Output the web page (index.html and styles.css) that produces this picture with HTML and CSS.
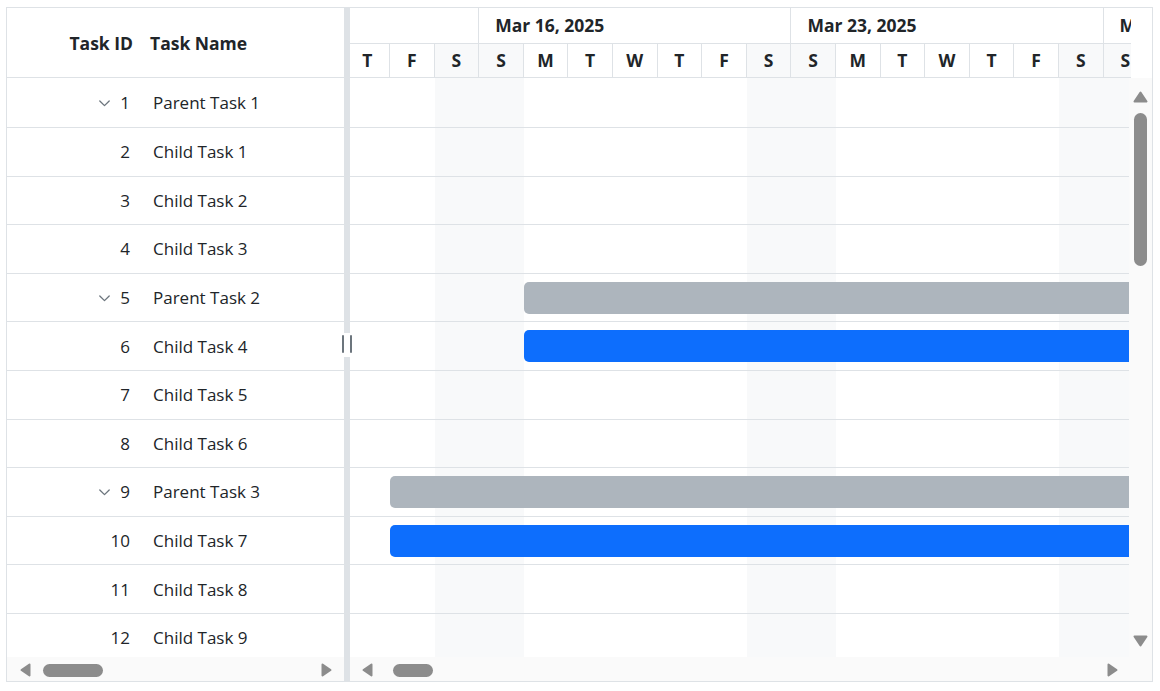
FILE: index.html
```html
<!DOCTYPE html>
<html lang="en">
<head>
<meta charset="utf-8">
<title>Gantt</title>
<link rel="stylesheet" href="styles.css">
</head>
<body>
<div class="gantt">
  <div class="grid-pane">
    <div class="grid-header">
      <div class="hc hc-id">Task ID</div>
      <div class="hc hc-name">Task Name</div>
    </div>
    <div class="grid-body">
      <div class="row"><div class="c-id"><svg class="chev" width="11" height="7" viewBox="0 0 11 7"><polyline points="0.8,1 5.5,5.6 10.2,1"/></svg>1</div><div class="c-name">Parent Task 1</div></div>
      <div class="row"><div class="c-id">2</div><div class="c-name">Child Task 1</div></div>
      <div class="row"><div class="c-id">3</div><div class="c-name">Child Task 2</div></div>
      <div class="row"><div class="c-id">4</div><div class="c-name">Child Task 3</div></div>
      <div class="row"><div class="c-id"><svg class="chev" width="11" height="7" viewBox="0 0 11 7"><polyline points="0.8,1 5.5,5.6 10.2,1"/></svg>5</div><div class="c-name">Parent Task 2</div></div>
      <div class="row"><div class="c-id">6</div><div class="c-name">Child Task 4</div></div>
      <div class="row"><div class="c-id">7</div><div class="c-name">Child Task 5</div></div>
      <div class="row"><div class="c-id">8</div><div class="c-name">Child Task 6</div></div>
      <div class="row"><div class="c-id"><svg class="chev" width="11" height="7" viewBox="0 0 11 7"><polyline points="0.8,1 5.5,5.6 10.2,1"/></svg>9</div><div class="c-name">Parent Task 3</div></div>
      <div class="row"><div class="c-id">10</div><div class="c-name">Child Task 7</div></div>
      <div class="row"><div class="c-id">11</div><div class="c-name">Child Task 8</div></div>
      <div class="row"><div class="c-id">12</div><div class="c-name">Child Task 9</div></div>
    </div>
    <div class="hscroll hscroll-left">
      <svg class="arr" width="11" height="14" viewBox="0 0 11 14"><path d="M9.5 1.5 L1.5 7 L9.5 12.5 Z"/></svg>
      <div class="thumb-h thumb-left"></div>
      <svg class="arr arr-end" width="11" height="14" viewBox="0 0 11 14"><path d="M1.5 1.5 L9.5 7 L1.5 12.5 Z"/></svg>
    </div>
  </div>

  <div class="splitter">
    <div class="handle"><span></span><span></span></div>
  </div>

  <div class="chart-pane">
    <div class="chart-header">
      <div class="th-clip">
        <div class="timeline-head">
          <div class="tier1">
            <div class="wk wk3"></div>
            <div class="wk wk7">Mar 16, 2025</div>
            <div class="wk wk8">Mar 23, 2025</div>
            <div class="wk wk8">Mar 30, 2025</div>
          </div>
          <div class="tier2">
            <div class="day">T</div><div class="day">F</div><div class="day we">S</div>
            <div class="day we">S</div><div class="day">M</div><div class="day">T</div><div class="day">W</div><div class="day">T</div><div class="day">F</div><div class="day we">S</div>
            <div class="day we">S</div><div class="day">M</div><div class="day">T</div><div class="day">W</div><div class="day">T</div><div class="day">F</div><div class="day we">S</div>
            <div class="day we">S</div>
          </div>
        </div>
      </div>
      <div class="th-spacer"></div>
    </div>

    <div class="chart-mid">
      <div class="chart-body">
        <div class="timeline-body">
          <div class="shade">
            <div class="sd"></div><div class="sd"></div><div class="sd we"></div>
            <div class="sd we"></div><div class="sd"></div><div class="sd"></div><div class="sd"></div><div class="sd"></div><div class="sd"></div><div class="sd we"></div>
            <div class="sd we"></div><div class="sd"></div><div class="sd"></div><div class="sd"></div><div class="sd"></div><div class="sd"></div><div class="sd we"></div>
            <div class="sd we"></div>
          </div>
          <div class="crow"></div>
          <div class="crow"></div>
          <div class="crow"></div>
          <div class="crow"></div>
          <div class="crow"><div class="bar bar-parent" style="margin-left:178.4px;width:640px"></div></div>
          <div class="crow"><div class="bar bar-child" style="margin-left:178.4px;width:640px"></div></div>
          <div class="crow"></div>
          <div class="crow"></div>
          <div class="crow"><div class="bar bar-parent" style="margin-left:44.6px;width:780px"></div></div>
          <div class="crow"><div class="bar bar-child" style="margin-left:44.6px;width:780px"></div></div>
          <div class="crow"></div>
          <div class="crow"></div>
        </div>
      </div>
      <div class="vscroll">
        <svg class="arr" width="15" height="12" viewBox="0 0 15 12"><path d="M1.5 10.5 L7.5 1.5 L13.5 10.5 Z"/></svg>
        <div class="thumb-v"></div>
        <svg class="arr arr-down" width="15" height="12" viewBox="0 0 15 12"><path d="M1.5 1.5 L7.5 10.5 L13.5 1.5 Z"/></svg>
      </div>
    </div>

    <div class="hscroll-row">
      <div class="hscroll hscroll-right">
        <svg class="arr" width="11" height="14" viewBox="0 0 11 14"><path d="M9.5 1.5 L1.5 7 L9.5 12.5 Z"/></svg>
        <div class="thumb-h thumb-right"></div>
        <svg class="arr arr-end" width="11" height="14" viewBox="0 0 11 14"><path d="M1.5 1.5 L9.5 7 L1.5 12.5 Z"/></svg>
      </div>
      <div class="corner"></div>
    </div>
  </div>
</div>
</body>
</html>
```

FILE: styles.css
```css
* { box-sizing: border-box; }

body {
  margin: 0;
  background: #ffffff;
  color: #212529;
  font-family: "Open Sans", "Noto Sans", "Liberation Sans", sans-serif;
  font-size: 17px;
}

.gantt {
  display: flex;
  width: 1147px;
  height: 675px;
  margin: 7px 0 0 6px;
  border: 1px solid #dee2e6;
  overflow: hidden;
}

/* ---------- left grid ---------- */
.grid-pane {
  width: 337px;
  flex: none;
  display: flex;
  flex-direction: column;
}

.grid-header {
  height: 70px;
  flex: none;
  display: flex;
  align-items: center;
  border-bottom: 1px solid #dee2e6;
  font-weight: 700;
  font-size: 17.5px;
}

.hc-id {
  width: 134px;
  text-align: right;
  padding-right: 8px;
}

.hc-name {
  padding-left: 9px;
}

.grid-body {
  flex: 1;
  min-height: 0;
  overflow: hidden;
}

.row,
.crow {
  height: 48.6px;
  border-bottom: 1px solid #dee2e6;
}

.row:first-child,
.crow:nth-child(2) {
  height: 50px;
}

.row {
  display: flex;
  align-items: center;
}

.c-id {
  width: 134px;
  flex: none;
  display: flex;
  align-items: center;
  justify-content: flex-end;
  padding-right: 11px;
}

.c-name {
  padding-left: 12px;
  white-space: nowrap;
}

.chev {
  margin-right: 10px;
  margin-top: 1px;
  fill: none;
  stroke: #6c757d;
  stroke-width: 1.3;
  stroke-linecap: round;
  stroke-linejoin: round;
}

/* ---------- scrollbars ---------- */
.hscroll {
  height: 24px;
  flex: none;
  display: flex;
  align-items: center;
  background: #fafafa;
  padding-top: 2px;
}

.hscroll-left {
  padding-left: 13px;
  padding-right: 12px;
}

.hscroll-right {
  flex: 1;
  padding-left: 12px;
  padding-right: 11px;
}

.arr path {
  fill: #8c8c8c;
  stroke: #8c8c8c;
  stroke-width: 2;
  stroke-linejoin: round;
}

.arr-end {
  margin-left: auto;
}

.thumb-h {
  height: 13px;
  border-radius: 7px;
  background: #8c8c8c;
}

.thumb-left {
  width: 60px;
  margin-left: 12px;
}

.thumb-right {
  width: 40px;
  margin-left: 20px;
}

.hscroll-row {
  height: 24px;
  flex: none;
  display: flex;
}

.corner {
  width: 23px;
  background: #fafafa;
}

.vscroll {
  width: 23px;
  flex: none;
  background: #fafafa;
  display: flex;
  flex-direction: column;
  align-items: center;
  padding-top: 13px;
  padding-bottom: 10px;
}

.thumb-v {
  width: 13px;
  height: 153px;
  margin-top: 10px;
  border-radius: 7px;
  background: #8c8c8c;
}

.arr-down {
  margin-top: auto;
}

/* ---------- splitter ---------- */
.splitter {
  width: 6px;
  flex: none;
  background: #dee2e6;
  position: relative;
}

.handle {
  position: absolute;
  left: -3px;
  top: 325px;
  width: 12px;
  height: 24px;
  background: #ffffff;
  display: flex;
  justify-content: space-between;
  padding: 2px 1px;
}

.handle span {
  width: 2px;
  height: 18px;
  border-radius: 1px;
  background: #6c757d;
}

/* ---------- chart ---------- */
.chart-pane {
  flex: 1;
  min-width: 0;
  display: flex;
  flex-direction: column;
}

.chart-header {
  height: 70px;
  flex: none;
  display: flex;
}

.th-clip {
  flex: 1;
  min-width: 0;
  overflow: hidden;
  border-bottom: 1px solid #dee2e6;
}

.th-spacer {
  width: 21px;
  flex: none;
}

.timeline-head {
  width: 802.8px;
  margin-left: -4.6px;
  font-weight: 700;
  font-size: 17.5px;
}

.tier1 {
  height: 36px;
  display: flex;
  border-bottom: 1px solid #dee2e6;
}

.wk {
  flex: none;
  border-right: 1px solid #dee2e6;
  display: flex;
  align-items: center;
  padding-left: 16px;
  padding-bottom: 2px;
  white-space: nowrap;
  overflow: hidden;
}

.wk3 { width: 133.8px; }
.wk7 { width: 312.2px; }
.wk8 { width: 312.2px; }

.tier2 {
  height: 33px;
  display: flex;
}

.day {
  width: 44.6px;
  flex: none;
  border-right: 1px solid #dee2e6;
  display: flex;
  align-items: center;
  justify-content: center;
  padding-bottom: 2px;
}

.day.we,
.sd.we {
  background: #f8f9fa;
}

.chart-mid {
  flex: 1;
  min-height: 0;
  display: flex;
}

.chart-body {
  flex: 1;
  min-width: 0;
  overflow: hidden;
}

.timeline-body {
  position: relative;
  width: 802.8px;
  height: 100%;
  margin-left: -4.6px;
}

.shade {
  position: absolute;
  inset: 0;
  display: flex;
}

.sd {
  width: 44.6px;
  flex: none;
}

.crow {
  position: relative;
  padding-top: 8px;
}

.bar {
  height: 32px;
  border-radius: 5px;
}

.bar-parent {
  background: #adb5bd;
}

.bar-child {
  background: #0d6efd;
}
```
